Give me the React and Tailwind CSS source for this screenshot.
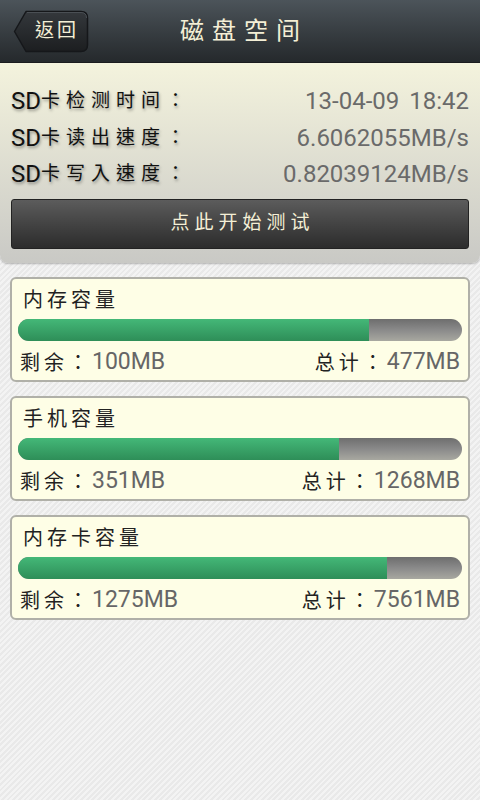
import { useState } from 'react';

const cards = [
  { title: '内存容量', free: 100, total: 477 },
  { title: '手机容量', free: 351, total: 1268 },
  { title: '内存卡容量', free: 1275, total: 7561 },
];

const rows = [
  ['检测时间', '13-04-09 18:42'],
  ['读出速度', '6.6062055MB/s'],
  ['写入速度', '0.82039124MB/s'],
];

const font = { fontFamily: 'Roboto, "Noto Sans CJK TC", sans-serif' };

const CapacityCard = ({ title, free, total }) => {
  const used = ((total - free) / total) * 100;
  return (
    <div className="bg-[#fefee6] border-2 border-[#b0b0a8] rounded-[6px] px-[6px] pt-[7px]">
      <div className="text-[20px] leading-[28px] text-[#222] tracking-[4px] pl-[5px]">{title}</div>
      <div className="mt-[5px] h-[22px] rounded-full overflow-hidden flex bg-gradient-to-b from-[#6e6e6e] via-[#8a8a8a] to-[#a8a8a0]">
        <div
          className="h-full bg-gradient-to-b from-[#44b878] to-[#2e8e58]"
          style={{ width: `${used}%` }}
        />
      </div>
      <div className="flex justify-between items-center mt-[5px] h-[34px] px-[2px]">
        <span className="flex items-center">
          <span className="text-[20px] text-[#222] tracking-[4px]">剩余：</span>
          <span className="text-[23px] text-[#666]">{free}MB</span>
        </span>
        <span className="flex items-center">
          <span className="text-[20px] text-[#222] tracking-[4px]">总计：</span>
          <span className="text-[23px] text-[#666]">{total}MB</span>
        </span>
      </div>
    </div>
  );
};

const BackButton = () => (
  <div className="absolute left-[13px] top-[10px] w-[76px] h-[43px]">
    <svg width="76" height="43" viewBox="0 0 76 43" className="absolute inset-0">
      <defs>
        <linearGradient id="bb" x1="0" y1="0" x2="0" y2="1">
          <stop offset="0" stopColor="#34383c" />
          <stop offset="1" stopColor="#1c1e20" />
        </linearGradient>
      </defs>
      <path
        d="M1.5 21.5 L13 1.5 H68 Q74.5 1.5 74.5 8 V35 Q74.5 41.5 68 41.5 H13 Z"
        fill="url(#bb)"
        stroke="#15171a"
        strokeWidth="1.5"
        strokeLinejoin="round"
      />
      <path d="M14 2.5 H68 Q73.5 2.5 73.5 8" fill="none" stroke="#4a4f54" strokeWidth="1" />
    </svg>
    <span className="absolute inset-0 flex items-center justify-center pl-[12px] text-[#f4efd6] text-[19px] tracking-[3px]">
      返回
    </span>
  </div>
);

export default function App() {
  const [tested] = useState(true);
  return (
    <div
      className="w-[480px] h-[800px] overflow-hidden bg-[#efefef] bg-[repeating-linear-gradient(135deg,#f3f3f3_0px,#f3f3f3_2px,#e9e9e9_2px,#e9e9e9_4px)]"
      style={font}
    >
      <header className="h-[63px] bg-gradient-to-b from-[#4c545a] to-[#25292c] border-b border-[#1a1c1e] flex items-center relative">
        <BackButton />
        <h1 className="w-full text-center text-[#f4efd6] text-[24px] tracking-[8px] pl-[8px]">磁盘空间</h1>
      </header>

      <section className="bg-gradient-to-b from-[#f4f3dd] to-[#c9c9c5] rounded-b-[8px] px-[11px] pt-[20px] pb-[14px] shadow-[0_1px_2px_rgba(0,0,0,0.25)]">
        {rows.map(([label, value]) => (
          <div key={label} className="flex justify-between items-center h-[36.5px]">
            <span className="flex items-center text-[#111] [text-shadow:1px_2px_3px_rgba(0,0,0,0.35)]">
              <span className="text-[24px]">SD</span>
              <span className="text-[19px] tracking-[6px]">卡{label}：</span>
            </span>
            <span className="text-[24px] text-[#6a6a6a] [word-spacing:4px]">{tested ? value : '--'}</span>
          </div>
        ))}
        <button className="mt-[6px] w-full h-[50px] rounded-[3px] bg-gradient-to-b from-[#5c5c5c] to-[#2c2c2c] border border-[#222] text-[#f4efd6] text-[19px] tracking-[5px] pl-[5px]">
          点此开始测试
        </button>
      </section>

      <main className="px-[10px] pt-[14px] flex flex-col gap-[14px]">
        {cards.map((c) => (
          <CapacityCard key={c.title} {...c} />
        ))}
      </main>
    </div>
  );
}
